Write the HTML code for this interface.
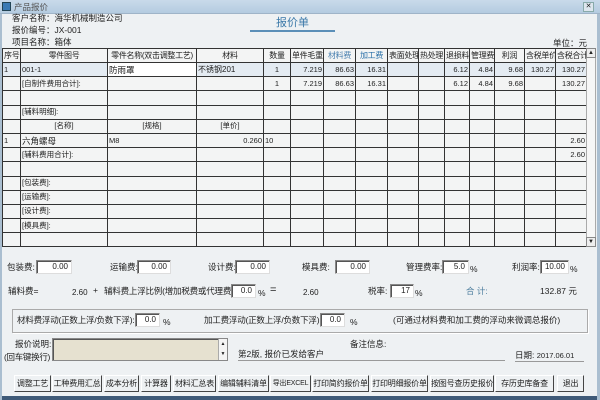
<!DOCTYPE html>
<html><head><meta charset="utf-8"><style>
*{margin:0;padding:0;box-sizing:border-box}
body{width:600px;height:400px;overflow:hidden;background:#eef1f3;font-family:"Liberation Sans","Noto Sans CJK SC",sans-serif;font-size:8.5px;color:#222;position:relative}
.a{position:absolute;white-space:nowrap;line-height:11px}
.tb{position:absolute;left:0;top:0;width:600px;height:14px;background:linear-gradient(#c9daea,#b4cbe0);border-bottom:1px solid #9fb4c8}
.in{position:absolute;height:14px;background:#fff;border:1px solid #888;border-right-color:#ddd;border-bottom-color:#ddd;text-align:right;padding-right:3px;line-height:12px;font-size:8px;box-shadow:inset 1px 1px 0 #555}
.btn{position:absolute;top:375px;height:17px;background:#eef1f3;border:1px solid #fff;border-right-color:#444;border-bottom-color:#444;text-align:center;line-height:15px;font-size:8px;white-space:nowrap;overflow:hidden;letter-spacing:-0.2px}
table{position:absolute;left:2px;top:48px;width:584px;border-collapse:collapse;table-layout:fixed;background:#f3f4f4}
td{border:1px solid #333;height:14.2px;padding:0 1px;font-size:7.5px;line-height:12px;white-space:nowrap;overflow:hidden}
tr.h td{text-align:center;font-size:8px;height:14px;letter-spacing:-0.3px}
.r{text-align:right}
.sel td{background:#e4ebf2}
</style></head><body>
<div class="tb"></div>
<div class="a" style="left:2px;top:2px;width:9px;height:9px;background:#3a7ab5;border:1px solid #245"></div>
<div class="a" style="left:14px;top:2px;color:#555">产品报价</div>
<div class="a" style="left:583px;top:2px;width:11px;height:10px;border:1px solid #8aa;background:#dde6ee;font-size:7px;line-height:8px;text-align:center">✕</div>
<div class="a" style="left:12px;top:13px">客户名称：海华机械制造公司</div>
<div class="a" style="left:12px;top:25px">报价编号：JX-001</div>
<div class="a" style="left:12px;top:37px">项目名称：箱体</div>
<div class="a" style="left:276px;top:17px;font-size:11px;color:#3a78a8;line-height:13px">报价单</div>
<div class="a" style="left:250px;top:30px;width:85px;height:2px;background:#5b8fb8"></div>
<div class="a" style="left:553px;top:38px">单位：元</div>
<table>
<colgroup><col style="width:18px"><col style="width:87px"><col style="width:89px"><col style="width:67px"><col style="width:27px"><col style="width:33px"><col style="width:32px"><col style="width:32px"><col style="width:31px"><col style="width:26px"><col style="width:25px"><col style="width:25px"><col style="width:30px"><col style="width:31px"><col style="width:31px"></colgroup>
<tr class="h"><td>序号</td><td>零件图号</td><td>零件名称(双击调整工艺)</td><td>材料</td><td>数量</td><td>单件毛重</td><td style="color:#4a80b0">材料费</td><td style="color:#2a70a8">加工费</td><td>表面处理</td><td>热处理</td><td>退损料</td><td>管理费</td><td>利润</td><td>含税单价</td><td>含税合计</td></tr>
<tr class="sel"><td>1</td><td>001-1</td><td style="background:#fff;font-size:8.5px">防雨罩</td><td style="font-size:8px">不锈钢201</td><td style="text-align:center">1</td><td class="r">7.219</td><td class="r">86.63</td><td class="r">16.31</td><td></td><td></td><td class="r">6.12</td><td class="r">4.84</td><td class="r">9.68</td><td class="r">130.27</td><td class="r">130.27</td></tr>
<tr><td></td><td>[自制件费用合计]:</td><td></td><td></td><td style="text-align:center">1</td><td class="r">7.219</td><td class="r">86.63</td><td class="r">16.31</td><td></td><td></td><td class="r">6.12</td><td class="r">4.84</td><td class="r">9.68</td><td></td><td class="r">130.27</td></tr>
<tr><td></td><td></td><td></td><td></td><td></td><td></td><td></td><td></td><td></td><td></td><td></td><td></td><td></td><td></td><td></td></tr>
<tr><td></td><td>[辅料明细]:</td><td></td><td></td><td></td><td></td><td></td><td></td><td></td><td></td><td></td><td></td><td></td><td></td><td></td></tr>
<tr><td></td><td style="text-align:center">[名称]</td><td style="text-align:center">[规格]</td><td style="text-align:center">[单价]</td><td></td><td></td><td></td><td></td><td></td><td></td><td></td><td></td><td></td><td></td><td></td></tr>
<tr><td>1</td><td style="font-size:8.5px">六角螺母</td><td>M8</td><td class="r">0.260</td><td>10</td><td></td><td></td><td></td><td></td><td></td><td></td><td></td><td></td><td></td><td class="r">2.60</td></tr>
<tr><td></td><td>[辅料费用合计]:</td><td></td><td></td><td></td><td></td><td></td><td></td><td></td><td></td><td></td><td></td><td></td><td></td><td class="r">2.60</td></tr>
<tr><td></td><td></td><td></td><td></td><td></td><td></td><td></td><td></td><td></td><td></td><td></td><td></td><td></td><td></td><td></td></tr>
<tr><td></td><td>[包装费]:</td><td></td><td></td><td></td><td></td><td></td><td></td><td></td><td></td><td></td><td></td><td></td><td></td><td></td></tr>
<tr><td></td><td>[运输费]:</td><td></td><td></td><td></td><td></td><td></td><td></td><td></td><td></td><td></td><td></td><td></td><td></td><td></td></tr>
<tr><td></td><td>[设计费]:</td><td></td><td></td><td></td><td></td><td></td><td></td><td></td><td></td><td></td><td></td><td></td><td></td><td></td></tr>
<tr><td></td><td>[模具费]:</td><td></td><td></td><td></td><td></td><td></td><td></td><td></td><td></td><td></td><td></td><td></td><td></td><td></td></tr>
<tr><td></td><td></td><td></td><td></td><td></td><td></td><td></td><td></td><td></td><td></td><td></td><td></td><td></td><td></td><td></td></tr>
</table>
<div class="a" style="left:586px;top:48px;width:10px;height:199px;background:#f6f6f6;border:1px solid #aaa"></div>
<div class="a" style="left:586px;top:48px;width:10px;height:10px;border:1px solid #888;background:#eee;font-size:6px;line-height:8px;text-align:center">▲</div>
<div class="a" style="left:586px;top:237px;width:10px;height:10px;border:1px solid #888;background:#eee;font-size:6px;line-height:8px;text-align:center">▼</div>

<div class="a" style="left:7px;top:262px">包装费:</div><div class="in" style="left:36px;top:260px;width:36px">0.00</div>
<div class="a" style="left:110px;top:262px">运输费:</div><div class="in" style="left:137px;top:260px;width:34px">0.00</div>
<div class="a" style="left:208px;top:262px">设计费:</div><div class="in" style="left:235px;top:260px;width:35px">0.00</div>
<div class="a" style="left:302px;top:262px">模具费:</div><div class="in" style="left:335px;top:260px;width:35px">0.00</div>
<div class="a" style="left:406px;top:262px">管理费率:</div><div class="in" style="left:442px;top:260px;width:27px">5.0</div><div class="a" style="left:470px;top:264px">%</div>
<div class="a" style="left:512px;top:262px">利润率:</div><div class="in" style="left:540px;top:260px;width:29px">10.00</div><div class="a" style="left:570px;top:264px">%</div>

<div class="a" style="left:8px;top:286px">辅料费=</div>
<div class="a" style="left:72px;top:287px;font-size:8px">2.60</div>
<div class="a" style="left:93px;top:285px">+</div>
<div class="a" style="left:104px;top:286px;letter-spacing:-0.2px">辅料费上浮比例(增加税费或代理费):</div>
<div class="in" style="left:231px;top:284px;width:25px">0.0</div>
<div class="a" style="left:258px;top:288px">%</div><div class="a" style="left:270px;top:285px;font-size:11px">=</div>
<div class="a" style="left:303px;top:287px;font-size:8px">2.60</div>
<div class="a" style="left:368px;top:286px">税率:</div><div class="in" style="left:390px;top:284px;width:24px">17</div><div class="a" style="left:415px;top:288px">%</div>
<div class="a" style="left:466px;top:286px;color:#4a7c9c">合 计:</div>
<div class="a" style="left:540px;top:286px">132.87 元</div>

<div class="a" style="left:12px;top:309px;width:576px;height:24px;border:1px solid #aaa;box-shadow:1px 1px 0 #fff"></div>
<div class="a" style="left:17px;top:315px;letter-spacing:-0.2px">材料费浮动(正数上浮/负数下浮):</div>
<div class="in" style="left:135px;top:313px;width:25px">0.0</div><div class="a" style="left:163px;top:317px">%</div>
<div class="a" style="left:204px;top:315px;letter-spacing:-0.2px">加工费浮动(正数上浮/负数下浮):</div>
<div class="in" style="left:320px;top:313px;width:25px">0.0</div><div class="a" style="left:350px;top:317px">%</div>
<div class="a" style="left:393px;top:315px">(可通过材料费和加工费的浮动来微调总报价)</div>

<div class="a" style="left:15px;top:339px">报价说明:</div>
<div class="a" style="left:4px;top:352px;letter-spacing:-0.3px">(回车键换行)</div>
<div class="a" style="left:52px;top:338px;width:176px;height:23px;background:#e6e1d0;border:1px solid #888;box-shadow:inset 1px 1px 0 #555"></div>
<div class="a" style="left:218px;top:339px;width:9px;height:21px;background:#f4f4f4;border-left:1px solid #aaa"><div style="font-size:5px;line-height:10px;text-align:center">▲<br>▼</div></div>
<div class="a" style="left:350px;top:339px">备注信息:</div>
<div class="a" style="left:238px;top:349px;width:267px;height:12px;border-bottom:1px solid #999">第2版, 报价已发给客户</div>
<div class="a" style="left:515px;top:350px;width:69px;height:12px;border-bottom:1px solid #999">日期: <span style="font-size:7.5px">2017.06.01</span></div>

<div class="btn" style="left:14px;width:37px">调整工艺</div>
<div class="btn" style="left:52px;width:50px">工种费用汇总</div>
<div class="btn" style="left:104px;width:35px">成本分析</div>
<div class="btn" style="left:141px;width:30px">计算器</div>
<div class="btn" style="left:173px;width:43px">材料汇总表</div>
<div class="btn" style="left:218px;width:51px">编辑辅料清单</div>
<div class="btn" style="left:270px;width:41px;font-size:7px">导出EXCEL</div>
<div class="btn" style="left:312px;width:57px">打印简约报价单</div>
<div class="btn" style="left:371px;width:57px">打印明细报价单</div>
<div class="btn" style="left:430px;width:64px">按图号查历史报价</div>
<div class="btn" style="left:495px;width:59px">存历史库备查</div>
<div class="btn" style="left:557px;width:27px">退出</div>
<div class="a" style="left:0;top:396px;width:600px;height:4px;background:#3f5a78"></div>
<div class="a" style="left:597px;top:14px;width:3px;height:386px;background:#aabed0"></div>
<div class="a" style="left:0;top:14px;width:2px;height:386px;background:#aabed0"></div>
</body></html>
